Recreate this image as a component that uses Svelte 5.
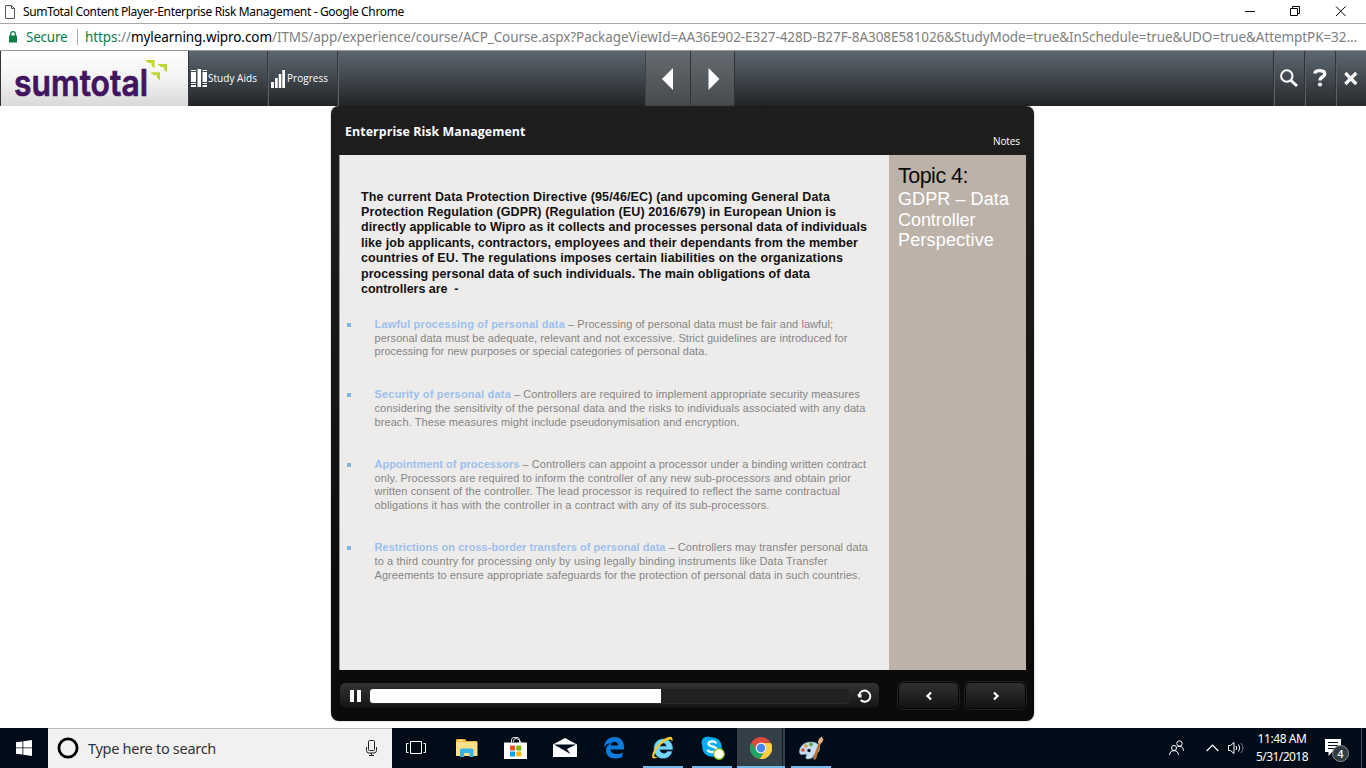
<script>
  const intro = [
    ['The current Data Protection Directive (95/46/EC) (and upcoming General Data', 469],
    ['Protection Regulation (GDPR) (Regulation (EU) 2016/679) in European Union is', 475],
    ['directly applicable to Wipro as it collects and processes personal data of individuals', 506],
    ['like job applicants, contractors, employees and their dependants from the member', 497],
    ['countries of EU. The regulations imposes certain liabilities on the organizations', 482],
    ['processing personal data of such individuals. The main obligations of data', 449],
    ['controllers are  -', 97.5]
  ];
  const points = [
    { head: ['Lawful processing of personal data', 190.5], first: ['– Processing of personal data must be fair and lawful;', 265],
      rest: [['personal data must be adequate, relevant and not excessive. Strict guidelines are introduced for', 473], ['processing for new purposes or special categories of personal data.', 333]] },
    { head: ['Security of personal data', 136.5], first: ['– Controllers are required to implement appropriate security measures', 346],
      rest: [['considering the sensitivity of the personal data and the risks to individuals associated with any data', 491], ['breach. These measures might include pseudonymisation and encryption.', 365]] },
    { head: ['Appointment of processors', 145], first: ['– Controllers can appoint a processor under a binding written contract', 343.5],
      rest: [['only. Processors are required to inform the controller of any new sub-processors and obtain prior', 476.5], ['written consent of the controller. The lead processor is required to reflect the same contractual', 465.5], ['obligations it has with the controller in a contract with any of its sub-processors.', 395]] },
    { head: ['Restrictions on cross-border transfers of personal data', 291], first: ['– Controllers may transfer personal data', 199.5],
      rest: [['to a third country for processing only by using legally binding instruments like Data Transfer', 453], ['Agreements to ensure appropriate safeguards for the protection of personal data in such countries.', 486]] }
  ];

  // Tracks a line of text so that it spans the given width.
  function fit(node, width) {
    node.style.letterSpacing = '0px';
    const natural = node.getBoundingClientRect().width;
    node.style.letterSpacing = (width - natural) / node.textContent.length + 'px';
  }
</script>

<div class="screen">
  <header class="titlebar">
    <svg class="page" width="12" height="14" viewBox="0 0 12 14"><path d="M1.500.5h6l3 3v10h-9zM7.500.5v3h3" fill="#fff" stroke="#555" /></svg>
    <span class="t" use:fit={381}>SumTotal Content Player-Enterprise Risk Management - Google Chrome</span>
    <svg class="wc" width="104" height="14" viewBox="0 0 104 14" fill="none" stroke="#000">
      <path d="M0 6.500h10M45.500 3.500h7v7h-7zM47.500 3v-1.500h7v7h-2M91 1.500l9.500 9.500M100.500 1.500l-9.500 9.500" />
    </svg>
  </header>
  <div class="address">
    <svg width="8" height="12" viewBox="0 0 8 12"><path d="M0 4.500h8v7H0z" fill="#0b8043" /><path d="M1.700 5V3a2.300 2.300 0 0 1 4.600 0v2" fill="none" stroke="#0b8043" stroke-width="1.300" /></svg>
    <span class="secure" use:fit={41.500}>Secure</span>
    <i></i>
    <span class="url" use:fit={1272}><b>https</b>://<em>mylearning.wipro.com</em>/ITMS/app/experience/course/ACP_Course.aspx?PackageViewId=AA36E902-E327-428D-B27F-8A308E581026&amp;StudyMode=true&amp;InSchedule=true&amp;UDO=true&amp;AttemptPK=32...</span>
  </div>

  <nav class="toolbar">
    <div class="logo">
      <svg width="187" height="55" viewBox="1 51 187 55">
        <text x="14" y="96" textLength="134" lengthAdjust="spacingAndGlyphs">sumtotal</text>
        <g fill="#bfd630"><path d="M145 60h9.500v8.500l-3-3v-2.500h-3.300z" /><path d="M157.500 64h9.500v8.500l-3-3v-2.500h-3.300z" /><path d="M150.500 72.300h9.500v8.500l-3-3v-2.500h-3.300z" /></g>
      </svg>
    </div>
    <div class="tool aids">
      <svg width="17" height="19" viewBox="0 0 17 19" fill="#fff"><path d="M0 1h5v1H0zM0 3h5v10H0zM0 14h5v1H0zM0 16h5v2H0zM6.500 0h3.500v18H6.500zM11.500 1H16v1h-4.500zM11.500 3H16v10h-4.500zM11.500 14H16v1h-4.500zM11.500 16H16v2h-4.500z" /></svg>
      <span use:fit={49}>Study Aids</span>
    </div>
    <div class="tool progress">
      <svg width="15" height="18" viewBox="0 0 15 18" fill="#fff"><path d="M0 12h3v6H0zM4 8h2.700v10H4zM7.700 4h2.600v14H7.700zM11.300 0H14v18h-2.700z" /></svg>
      <span use:fit={41}>Progress</span>
    </div>
    <div class="pager">
      <div><svg width="44" height="54" viewBox="0 0 44 54"><path d="M16 28L27 17v22z" fill="#fff" /></svg></div>
      <div><svg width="44" height="54" viewBox="0 0 44 54"><path d="M28.500 28L17.500 17v22z" fill="#fff" /></svg></div>
    </div>
    <div class="actions">
      <div><svg width="30" height="55" viewBox="0 0 30 55" fill="none" stroke="#fff"><circle cx="12.800" cy="25" r="5.700" stroke-width="2" /><path d="M17 29.500l6 5.500" stroke-width="3" /></svg></div>
      <div><svg width="30" height="55" viewBox="0 0 30 55" fill="none" stroke="#fff"><path d="M9.800 22.500c.5-4 10-4 10 .5 0 3.300-4.800 2.700-4.800 6.500" stroke-width="3.300" /><circle cx="15" cy="33.500" r="2.100" fill="#fff" stroke="none" /></svg></div>
      <div><svg width="30" height="55" viewBox="0 0 30 55" fill="none" stroke="#fff"><path d="M9.300 22l11 11M20.300 22l-11 11" stroke-width="3.200" /></svg></div>
    </div>
  </nav>

  <main>
    <section class="player">
      <div class="phead">
        <h1 use:fit={180.500}>Enterprise Risk Management</h1>
        <span class="notes"><span use:fit={27}>Notes</span></span>
      </div>
      <div class="slide">
        <article>
          <div class="intro">
            {#each intro as [text, w]}<div><span use:fit={w}>{text}</span></div>{/each}
          </div>
          <ul>
            {#each points as p}
              <li>
                <div class="first"><strong use:fit={p.head[1]}>{p.head[0]}</strong><span use:fit={p.first[1]}>{p.first[0]}</span></div>
                {#each p.rest as [text, w]}<div><span use:fit={w}>{text}</span></div>{/each}
              </li>
            {/each}
          </ul>
        </article>
        <aside>
          <h2><span use:fit={70}>Topic 4:</span></h2>
          <div><span use:fit={111}>GDPR – Data</span></div>
          <div><span use:fit={77.500}>Controller</span></div>
          <div><span use:fit={96}>Perspective</span></div>
        </aside>
      </div>
      <div class="controls">
        <div class="seek">
          <svg width="11" height="12" viewBox="0 0 11 12" fill="#fff"><path d="M0 0h4v12H0zM7 0h4v12H7z" /></svg>
          <div class="track"><div class="fill"></div></div>
          <svg width="15" height="14" viewBox="0 0 15 14" fill="none" stroke="#fff"><path d="M2.200 6A5.600 5.600 0 1 1 3.600 11" stroke-width="1.900" /><path d="M.3 5.300h4.200v3.200H1.500z" fill="#fff" stroke="none" /></svg>
        </div>
        <div class="btn"><svg width="8" height="10" viewBox="0 0 8 10"><path d="M6 1.500L2.500 5 6 8.500" fill="none" stroke="#fff" stroke-width="2.300" /></svg></div>
        <div class="btn"><svg width="8" height="10" viewBox="0 0 8 10"><path d="M2 1.500L5.500 5 2 8.500" fill="none" stroke="#fff" stroke-width="2.300" /></svg></div>
      </div>
    </section>
  </main>

  <footer class="taskbar">
    <div class="start"><svg width="16" height="16" viewBox="0 0 16 16" fill="#fff"><path d="M0 2.300L6.500 1.400v6.100H0zM7.300 1.200L16 0v7.500H7.300zM0 8.300h6.500v6.200L0 13.700zM7.300 8.300H16V16l-8.700-1.300z" /></svg></div>
    <div class="search">
      <svg width="22" height="22" viewBox="0 0 22 22"><circle cx="11" cy="11" r="9.100" fill="none" stroke="#000" stroke-width="2.800" /></svg>
      <span use:fit={128}>Type here to search</span>
      <svg class="mic" width="11" height="16" viewBox="0 0 11 16" fill="none" stroke="#222"><rect x="2.500" y=".5" width="6" height="10" rx="1" /><path d="M.5 7v3.500q0 2.500 2.500 2.500h5q2.500 0 2.500-2.500V7M5.500 13v2.500M3 15.500h5" /></svg>
    </div>
    <div class="app view">
      <svg width="20" height="14" viewBox="0 0 20 14" fill="none" stroke="#fff"><path d="M4.500.5h11v12h-11zM2.500 2.500h-2v9h2M17.500 2.500h2v9h-2" /></svg>
    </div>
    <div class="app">
      <svg width="22" height="20" viewBox="0 0 22 20"><path d="M0 2q0-1 1-1h8l1.500 2H21v3H0z" fill="#e8b633" /><path d="M0 4h21.500v14H0z" fill="#ffe08a" /><path d="M2 2.500h5" stroke="#fff0c0" /><path d="M4 19v-7q0-1.500 1.500-1.500h10.500q1.500 0 1.500 1.500v7h-4v-4H8v4z" fill="#38b1e4" /></svg>
    </div>
    <div class="app">
      <svg width="24" height="24" viewBox="0 0 24 24"><path d="M0 6.500h23V23H0z" fill="#fff" /><path d="M7.500 7V4q0-2.500 2.500-2.500h3Q15.500 1.500 15.500 4v3M9.500 6V5q0-2.500 2.500-2.500T17 6v1" fill="none" stroke="#ddd" /><path d="M6 9.500h5v5H6z" fill="#f25022" /><path d="M12.300 9.500h5v5h-5z" fill="#7fba00" /><path d="M6 15.500h5v5H6z" fill="#00a4ef" /><path d="M12.300 15.500h5v5h-5z" fill="#ffb900" /></svg>
    </div>
    <div class="app">
      <svg width="24" height="20" viewBox="0 0 24 20"><path d="M0 6.500L12 0l12 6.500V19H0z" fill="#fff" /><path d="M1 6.500h22L14 11l3.500 5L1 6.500z" fill="#000c17" /></svg>
    </div>
    <div class="app">
      <svg width="21" height="22" viewBox="0 0 21 22"><path d="M0 10C1 3.500 5 0 10.500 0 17 0 20 4.500 20 9.500v3H6.500c.2 3 3 4.500 6 4.500 2.500 0 4.500-.5 6-1.500v4.300c-2 1.300-4.500 1.700-7 1.700-5.500 0-9.500-3-9.500-8 0-3.500 2-6 5-7.300C4 6.500 2 7.500 0 10zm6.700-1.500h7.500c0-2-1-3.800-3.700-3.800-2 0-3.600 1.600-3.800 3.800z" fill="#0b7bdc" /></svg>
    </div>
    <div class="app open">
      <svg width="24" height="24" viewBox="0 0 24 24"><path d="M21.500 13.500H8.700C9 18 15.500 18.500 16 15.500h5C18 26 3 24 3 12.500 3 7 7 3 12 3c6 0 10 4 9.500 10.500zM8.800 10.300h6.700c-.4-4.500-6.300-4.500-6.700 0z" fill="#75d6fb" stroke="#37aee2" stroke-width=".5" /><path d="M1.500 22C-1 17 10 2.500 18 1q5-1 3 5 0-3.500-4-2C9 7 2 18 3.500 20.500q2 1.500 5-1-4 4-7 2.500z" fill="#fcc92f" /></svg>
    </div>
    <div class="app open">
      <svg width="24" height="24" viewBox="0 0 24 24"><circle cx="6.500" cy="6.500" r="6" fill="#00aff0" /><circle cx="11" cy="11" r="9.800" fill="#00aff0" /><circle cx="15.500" cy="15.500" r="6" fill="#00aff0" /><path d="M15 7.500c-.5-2.500-7.500-3-7.500.2 0 3.600 8 1.700 8 5.800 0 3.800-8.500 3.300-8.800.2" fill="none" stroke="#fff" stroke-width="2.300" /><circle cx="18" cy="18" r="5.300" fill="#fff" stroke="#8abf00" stroke-width="1.200" /></svg>
    </div>
    <div class="app open active">
      <svg width="22" height="22" viewBox="0 0 22 22"><circle cx="11" cy="11" r="11" fill="#de4b3b" /><path d="M1.500 5.500A11 11 0 0 0 9.800 22l5.500-9L11 16 6 13z" fill="#1ea362" /><path d="M20.900 6A11 11 0 0 1 9.800 22l5.700-9L11 6z" fill="#ffce44" /><circle cx="11" cy="11" r="5.400" fill="#f1f1f1" /><circle cx="11" cy="11" r="4.200" fill="#4587f4" /></svg>
    </div>
    <div class="app open">
      <svg width="26" height="24" viewBox="0 0 26 24"><path d="M2 18C0 12 5 6 13 6c6 0 9 3 8.500 7-.5 5-5 4-6 7-.7 2-3 3-6 3-2 0-2-2-1-3.500C9.500 17 4 19.500 2 18z" fill="#c7dff0" stroke="#87aac5" stroke-width=".6" /><circle cx="5" cy="14" r="1.800" fill="#d34b3a" /><circle cx="8" cy="10" r="1.800" fill="#e69a32" /><circle cx="13" cy="8.500" r="1.900" fill="#5baf46" /><circle cx="11" cy="14.500" r="1.700" fill="#001226" /><path d="M15 22l6-16 2 1-5 16q-2 2-3-1z" fill="#bb7437" /><path d="M20 7q-.5-4 4-6.500l.5 2 1 .5q-1 4-3.500 5z" fill="#e3b37d" /></svg>
    </div>
    <div class="tray">
      <svg class="people" width="16" height="16" viewBox="0 0 16 16" fill="none" stroke="#fff"><circle cx="10.500" cy="3.500" r="2.700" /><path d="M8.500 6.700q5.500-1.700 6 4" /><circle cx="5" cy="8" r="2.500" /><path d="M.7 15q0-4.300 4.300-4.300T9.300 15" /></svg>
      <svg class="up" width="13" height="8" viewBox="0 0 13 8" fill="none" stroke="#fff" stroke-width="1.200"><path d="M.7 7l5.800-5.800L12.300 7" /></svg>
      <svg class="vol" width="17" height="14" viewBox="0 0 17 14" fill="none" stroke="#fff"><path d="M.5 4.500h2l3.500-3v11l-3.500-3h-2zM8 5q1.500 2 0 4M10.500 3.500q2.500 3.500 0 7" /><path d="M13 2q4 5 0 10" stroke="#7a818a" /></svg>
      <div class="clock"><div><span use:fit={49}>11:48 AM</span></div><div><span use:fit={52}>5/31/2018</span></div></div>
      <div class="note">
        <svg width="16" height="18" viewBox="0 0 16 18"><path d="M0 0h16v13H7l-3.500 4v-4H0z" fill="#fff" /><path d="M3 3.500h10M3 6.500h10M3 9.500h7" stroke="#000c17" /></svg>
        <span class="badge">4</span>
      </div>
      <i></i>
    </div>
  </footer>
</div>

<style>
  :global(body) { margin: 0; background: #fff; overflow: hidden; }
  .screen { width: 1366px; height: 768px; display: flex; flex-direction: column; font-family: "Open Sans", "Noto Sans", sans-serif; }
  .screen * { box-sizing: border-box; }
  span, strong, h1 { white-space: pre; }
  svg { display: block; flex: none; }
  .titlebar { height: 24px; flex: none; display: flex; align-items: center; padding: 1px 20px 1px 4px; border-bottom: 1px solid #a8a8a8; font: 12px "Noto Sans", sans-serif; color: #000; }
  .t { margin-left: 7px; }
  .wc { margin-left: auto; margin-right: -3px; }
  .address { height: 27px; flex: none; display: flex; align-items: center; padding-left: 9px; border-bottom: 1px solid #999; font: 13.5px "Noto Sans", sans-serif; }
  .secure { margin-left: 9px; color: #0b8043; }
  .address i { width: 1px; height: 16px; background: #aaa; margin: 0 7.5px 0 9px; }
  .url { color: #808080; }
  .url b { font-weight: 400; color: #0b8043; }
  .url em { font-style: normal; color: #000; }
  .toolbar { height: 55px; flex: none; display: flex; background: linear-gradient(#5b656f, #434a51 45%, #222325); color: #fff; }
  .logo { width: 189px; border-left: 1px solid #30343a; border-right: 1px solid #33383d; background: linear-gradient(#fff, #f3f3f3 50%, #d9d9d9); }
  .logo text { font: 600 37px Inter, sans-serif; fill: #42145f; stroke: #42145f; stroke-width: .7px; }
  .tool { display: flex; align-items: center; font-size: 10px; font-weight: 500; border-right: 1px solid #33383d; box-shadow: 1px 0 #5a6066; }
  .tool span { position: relative; top: -1px; }
  .aids { width: 79px; padding-left: 2px; }
  .progress { width: 70px; padding-left: 3px; }
  .progress svg { margin-right: 1px; }
  .pager { display: flex; margin-left: 307px; border-left: 1px solid #3c4247; }
  .pager div { width: 44.5px; border-right: 1px solid #303336; background: linear-gradient(#656b70, #464a4d); }
  .actions { display: flex; margin-left: auto; }
  .actions div { width: 31px; border-left: 1px solid #2f3439; background: linear-gradient(#5e6872, #454c53 45%, #28292c); box-shadow: inset 1px 0 #5a6066; }
  main { flex: 1; display: flex; justify-content: center; align-items: flex-start; min-height: 0; padding-right: 1px; }
  .player { width: 703px; height: 615px; border-radius: 8px; background: linear-gradient(#1e1e1e, #1a1a1a 30%, #0b0b0b 85%); display: flex; flex-direction: column; padding: 0 8px; box-shadow: 0 0 1px #000; }
  .phead { height: 49px; display: flex; justify-content: space-between; padding: 0 6px; color: #fff; }
  h1 { margin: 17px 0 0; font-size: 12.4px; line-height: 17px; font-weight: 700; height: 17px; }
  .notes { font-size: 10px; line-height: 14px; margin-top: 28px; font-weight: 500; }
  .slide { height: 514.5px; display: flex; font-family: "Liberation Sans", Arial, sans-serif; }
  article { width: 549.5px; background: #eeeceb; border-left: 1px solid #999; }
  .intro { padding: 34.5px 0 0 21px; font-weight: 700; font-size: 12.5px; line-height: 15.4px; color: #111; }
  ul { list-style: none; margin: 20.5px 0 0; padding: 0 0 0 34.5px; font-size: 11px; line-height: 13.8px; color: #858585; }
  li { margin-bottom: 28px; position: relative; }
  li:first-child { margin-bottom: 29.2px; }
  li::before { content: ""; position: absolute; left: -28px; top: 5px; width: 4px; height: 4px; background: #84b4dc; }
  .first { display: flex; gap: 3px; }
  strong { color: #9dbfee; }
  aside { flex: 1; background: #bdb2a9; padding: 9px 0 0 9.5px; color: #fff; font-size: 18px; line-height: 20.5px; }
  h2 { margin: 0; font-size: 21.5px; line-height: 25px; font-weight: 400; color: #0c0c0c; }
  .controls { display: flex; padding: 13.5px 0 0 1px; }
  .seek { width: 539px; height: 25px; border-radius: 5px; background: linear-gradient(#333, #141414); display: flex; align-items: center; padding: 0 7px 0 10px; box-shadow: 0 0 1px #000; }
  .track { width: 481px; height: 16px; margin: 0 7px 0 8px; border: 1px solid #2a2a2a; border-radius: 4px; background: #202020; }
  .fill { width: 291px; height: 14px; background: #fff; border-radius: 3px 0 0 3px; }
  .btn { width: 59px; height: 25px; margin-left: 20px; border-radius: 5px; background: linear-gradient(#303030, #131313); box-shadow: 0 0 0 1px #050505, 0 0 0 2px #222; display: flex; align-items: center; justify-content: center; }
  .btn + .btn { margin-left: 8px; }
  .taskbar { height: 40px; flex: none; display: flex; background: #000c17; color: #fff; }
  .start { width: 48px; display: flex; align-items: center; justify-content: center; }
  .search { width: 344px; background: #f1f1f1; border-top: 1px solid #bbb; display: flex; align-items: center; padding: 0 15px 2px 9px; color: #333; font: 14.5px "Noto Sans", sans-serif; }
  .search span { margin-left: 9px; }
  .mic { margin-left: auto; }
  .app { width: 49.2px; display: flex; align-items: center; justify-content: center; position: relative; }
  .view { width: 50px; padding-right: 2px; }
  .open::after { content: ""; position: absolute; left: 4.5px; bottom: 0; width: 40px; height: 2px; background: #76b9ed; }
  .active { background: linear-gradient(90deg, #343f48 0 45px, #101b25 45px 46px, #343f48 46px); margin-right: 1px; width: 48px; }
  .active::after { left: 0; width: 48px; }
  .tray { margin-left: auto; display: flex; align-items: center; }
  .up { margin-left: 21px; }
  .vol { margin-left: 9px; }
  .clock { width: 54px; margin-left: 10px; text-align: center; font: 12px/18px "Noto Sans", sans-serif; }
  .note { width: 26px; height: 24px; margin-left: 16px; padding-top: 3px; position: relative; }
  .badge { position: absolute; left: 7px; top: 9px; width: 17px; height: 17px; border-radius: 50%; background: #333b44; border: 1px solid #8c9298; font-size: 11px; line-height: 15px; text-align: center; font-weight: 600; }
  .tray i { width: 1px; height: 40px; background: #4b545c; margin: 0 4px 0 10px; }
</style>
